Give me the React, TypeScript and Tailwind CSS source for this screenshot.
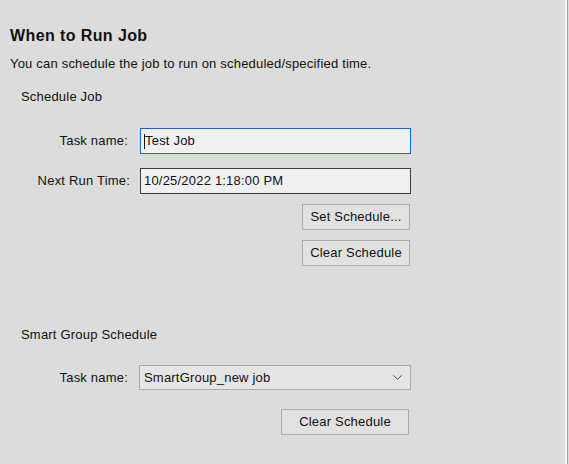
import { ChevronDown } from 'lucide-react';

const Button = ({ label, className }: { label: string; className: string }) => (
  <button
    className={`h-[26px] border border-[#adadad] bg-[#e1e1e1] text-[13px] text-[#111] tracking-[0.2px] ${className}`}
  >
    {label}
  </button>
);

const App = () => {
  return (
    <div className="w-[569px] h-[464px] bg-[#dcdcdc] flex text-[#111] overflow-hidden font-['Liberation_Sans',Arial,sans-serif] tracking-[0.2px]">
      <div className="flex-1 flex flex-col pl-[10px] pt-[27px]">
        <h1 className="text-[16px] font-bold leading-[18px] tracking-[0.4px]">When to Run Job</h1>
        <p className="text-[13px] leading-[16px] mt-[11px]">
          You can schedule the job to run on scheduled/specified time.
        </p>

        <div className="pl-[11px] mt-[17px] text-[13px] leading-[16px]">Schedule Job</div>

        <div className="flex flex-col mt-[23px]">
          <div className="flex items-center h-[26px]">
            <label className="w-[118px] text-right text-[13px]">Task name:</label>
            <div className="ml-[12px] w-[271px] h-[26px] border border-[#1e63c4] bg-[#f0f0f0] flex items-center pl-[3px] text-[13px]">
              <span className="w-px h-[15px] bg-[#111]" />
              <span>Test Job</span>
            </div>
          </div>
          <div className="flex items-center h-[26px] mt-[14px]">
            <label className="w-[120px] text-right text-[13px]">Next Run Time:</label>
            <div className="ml-[10px] w-[271px] h-[26px] border border-[#3a3a3a] bg-[#f0f0f0] flex items-center pl-[3px] text-[13px]">
              10/25/2022 1:18:00 PM
            </div>
          </div>
          <div className="flex flex-col items-end w-[400px] mt-[10px] gap-[10px]">
            <Button label="Set Schedule..." className="w-[108px]" />
            <Button label="Clear Schedule" className="w-[108px]" />
          </div>
        </div>

        <div className="pl-[11px] mt-[61px] text-[13px] leading-[16px]">Smart Group Schedule</div>

        <div className="flex items-center h-[25px] mt-[22px]">
          <label className="w-[118px] text-right text-[13px]">Task name:</label>
          <div className="ml-[11px] w-[272px] h-[25px] border border-[#adadad] bg-[#e5e5e5] flex items-center justify-between pl-[4px] pr-[5px] text-[13px]">
            <span>SmartGroup_new job</span>
            <ChevronDown size={15} strokeWidth={1.4} className="text-[#333]" />
          </div>
        </div>
        <div className="flex justify-end w-[399px] mt-[19px]">
          <Button label="Clear Schedule" className="w-[128px]" />
        </div>
      </div>
      <div className="w-[2px] bg-[#f4f4f4]" />
      <div className="w-px bg-[#a6a6a6]" />
      <div className="w-[1px] bg-[#dcdcdc]" />
    </div>
  );
};

export default App;
